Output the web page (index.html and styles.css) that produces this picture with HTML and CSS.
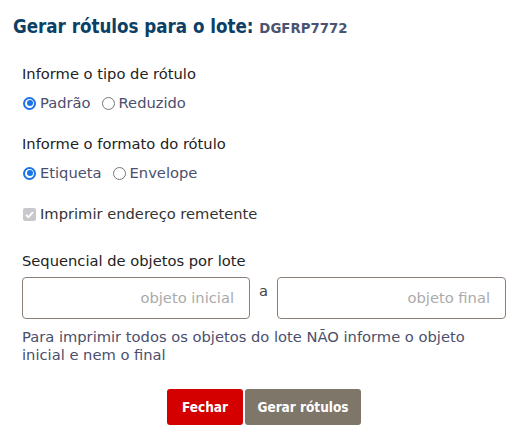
FILE: index.html
```html
<!DOCTYPE html>
<html lang="pt">
<head>
<meta charset="utf-8">
<link rel="stylesheet" href="styles.css">
</head>
<body>
<div class="dialog">
  <h1 class="title">Gerar rótulos para o lote: <span class="lote">DGFRP7772</span></h1>
  <div class="body">
    <div class="group">
      <div class="label">Informe o tipo de rótulo</div>
      <div class="options">
        <label class="opt"><span class="radio on"></span>Padrão</label>
        <label class="opt"><span class="radio"></span>Reduzido</label>
      </div>
    </div>
    <div class="group">
      <div class="label">Informe o formato do rótulo</div>
      <div class="options">
        <label class="opt"><span class="radio on"></span>Etiqueta</label>
        <label class="opt"><span class="radio"></span>Envelope</label>
      </div>
    </div>
    <label class="check"><span class="box"><svg viewBox="0 0 13 13" width="13" height="13"><path d="M3 6.8 L5.4 9.2 L10 4.2" fill="none" stroke="#fff" stroke-width="1.8"/></svg></span>Imprimir endereço remetente</label>
    <div class="seq">
      <div class="label">Sequencial de objetos por lote</div>
      <div class="inputs">
        <div class="input first">objeto inicial</div>
        <span class="a">a</span>
        <div class="input second">objeto final</div>
      </div>
      <p class="help">Para imprimir todos os objetos do lote NÃO informe o objeto inicial e nem o final</p>
    </div>
    <div class="actions">
      <button class="btn close">Fechar</button>
      <button class="btn gen">Gerar rótulos</button>
    </div>
  </div>
</div>
</body>
</html>
```
FILE: styles.css
```css
* { box-sizing: border-box; }
body {
  margin: 0;
  background: #fff;
  font-family: "DejaVu Sans", Verdana, sans-serif;
  color: #2b2b3a;
}
.dialog { padding: 13px 13px 0 13px; }
.title {
  margin: 0;
  font-family: "DejaVu Sans Condensed", "DejaVu Sans", sans-serif;
  font-size: 18.6px;
  font-weight: bold;
  color: #0b3f66;
  line-height: 28px;
}
.lote {
  font-family: "DejaVu Sans", sans-serif;
  font-size: 13.3px;
  color: #4a5470;
}
.body { padding: 21px 0 0 9px; }
.group { margin-bottom: 21px; }
.label {
  font-size: 14.7px;
  color: #222;
  line-height: 20px;
}
.options {
  display: flex;
  gap: 10px;
  margin-top: 9px;
}
.opt {
  display: flex;
  align-items: center;
  font-size: 14.7px;
  color: #4b4e6d;
  line-height: 20px;
}
.radio {
  width: 13px;
  height: 13px;
  border-radius: 50%;
  border: 1.5px solid #777;
  margin-right: 4px;
  margin-left: 1px;
  position: relative;
}
.radio.on { border: 2px solid #1a73e8; }
.radio.on::after {
  content: "";
  position: absolute;
  left: 1.5px; top: 1.5px;
  width: 6px; height: 6px;
  border-radius: 50%;
  background: #1a73e8;
}
.check {
  display: flex;
  align-items: center;
  font-size: 14.7px;
  color: #333;
  line-height: 20px;
}
.box {
  width: 13px; height: 13px;
  border-radius: 2px;
  background: #c8c8cc;
  margin: 0 4px 0 1px;
  display: flex;
}
.seq { margin-top: 27px; }
.inputs {
  display: flex;
  align-items: flex-start;
  margin-top: 6px;
}
.input {
  height: 42px;
  border: 1px solid #8a8078;
  border-radius: 4px;
  font-size: 14.7px;
  color: #aaa;
  text-align: right;
  padding: 11px 15px 0 0;
}
.first { width: 228px; }
.second { width: 229px; }
.a {
  width: 27px;
  text-align: center;
  font-size: 14.7px;
  color: #444;
  padding-top: 5px;
}
.help {
  margin: 9px 0 0 0;
  font-size: 14.7px;
  color: #4b4e6d;
  line-height: 18px;
}
.actions {
  display: flex;
  justify-content: center;
  gap: 2px;
  margin-top: 25px;
}
.btn {
  border: none;
  border-radius: 3px;
  height: 36px;
  font-family: "DejaVu Sans Condensed", "DejaVu Sans", sans-serif;
  font-size: 13.5px;
  font-weight: bold;
  color: #fff;
}
.close { background: #d40000; width: 76px; }
.gen { background: #7f766a; width: 116px; }
```
